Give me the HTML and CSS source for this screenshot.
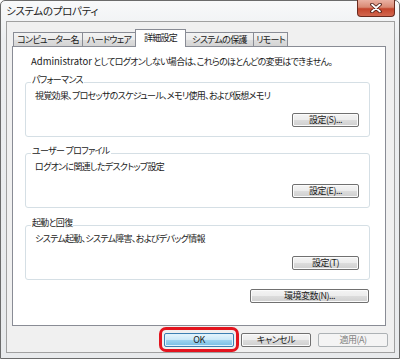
FILE: index.html
```html
<!DOCTYPE html>
<html lang="ja">
<head>
  <meta charset="UTF-8">
  <title>システムのプロパティ</title>
  <link rel="stylesheet" href="styles.css">
</head>
<body>
  <div class="window">
    <div class="titlebar">
      <span class="title">システムのプロパティ</span>
      <span class="close">
        <svg width="14" height="10" viewBox="0 0 14 10">
          <path d="M3 1.5 L11 8.5 M11 1.5 L3 8.5" stroke="#4a1a12" stroke-width="3.6" stroke-linecap="round"/>
          <path d="M3 1.5 L11 8.5 M11 1.5 L3 8.5" stroke="#ffffff" stroke-width="1.8" stroke-linecap="round"/>
        </svg>
      </span>
    </div>
    <div class="client">
      <div class="tabs">
        <span class="tab tab-name">コンピューター名</span>
        <span class="tab tab-hw">ハードウェア</span>
        <span class="tab tab-adv on">詳細設定</span>
        <span class="tab tab-prot">システムの保護</span>
        <span class="tab tab-rem">リモート</span>
      </div>
      <div class="panel">
        <p class="notice"><span class="latin">Administrator</span> としてログオンしない場合は、これらのほとんどの変更はできません。</p>
        <fieldset class="group">
          <legend>パフォーマンス</legend>
          <p class="desc">視覚効果、プロセッサのスケジュール、メモリ使用、および仮想メモリ</p>
          <div class="actions"><button class="btn btn-set">設定(S)...</button></div>
        </fieldset>
        <fieldset class="group">
          <legend>ユーザー プロファイル</legend>
          <p class="desc">ログオンに関連したデスクトップ設定</p>
          <div class="actions"><button class="btn btn-set">設定(E)...</button></div>
        </fieldset>
        <fieldset class="group group-last">
          <legend>起動と回復</legend>
          <p class="desc">システム起動、システム障害、およびデバッグ情報</p>
          <div class="actions"><button class="btn btn-set">設定(T)</button></div>
        </fieldset>
        <div class="env"><button class="btn btn-env">環境変数(N)...</button></div>
      </div>
      <div class="footer">
        <span class="ok-wrap">
          <button class="btn btn-foot btn-default">OK</button>
          <span class="ring"></span>
        </span>
        <button class="btn btn-foot">キャンセル</button>
        <button class="btn btn-foot" disabled>適用(A)</button>
      </div>
    </div>
  </div>
</body>
</html>
```

FILE: styles.css
```css
body{
  margin: 0;
  font-family: "Noto Sans CJK JP", sans-serif;
  font-size: 9px;
  letter-spacing: -0.7px;
  color: #1a1a1a;
  font-feature-settings: "palt" 1;
}
.latin{
  letter-spacing: 0;
  font-size: 9.5px;
}
.window{
  box-sizing: border-box;
  width: 400px;
  height: 359px;
  border: 1px solid #6b6b6b;
  border-radius: 5px 5px 0 0;
  background: linear-gradient(#f8f9fa, #eceef0 40px, #e8eaec);
  display: flex;
  flex-direction: column;
  padding: 0 4px 5px 5px;
}
.titlebar{
  height: 20px;
  display: flex;
  justify-content: space-between;
  align-items: flex-start;
}
.title{
  line-height: 19px;
  font-size: 10.5px;
  letter-spacing: -0.3px;
  color: #222;
}
.close{
  box-sizing: border-box;
  width: 38px;
  height: 17px;
  margin-top: -1px;
  border: 1px solid #6a2a1e;
  border-top: none;
  border-radius: 0 0 4px 4px;
  background: linear-gradient(#eab1a3, #d98a74 45%, #c4452c 55%, #d2674f);
  display: flex;
  align-items: center;
  justify-content: center;
}
.client{
  flex: 1;
  border: 1px solid #a0a0a0;
  background: #f0f0f0;
  padding: 7px 6px 0 5px;
  display: flex;
  flex-direction: column;
}
.tabs{
  display: flex;
  align-items: flex-end;
  height: 17px;
  padding-left: 1px;
}
.tab{
  box-sizing: border-box;
  height: 14px;
  border: 1px solid #898c95;
  border-bottom: none;
  border-right: none;
  background: linear-gradient(#f3f3f3, #ebebeb 50%, #dedede 50%, #d4d4d4);
  text-align: center;
  line-height: 13px;
  white-space: nowrap;
}
.tab-rem{
  border-right: 1px solid #898c95;
}
.tab.on{
  position: relative;
  height: 18px;
  margin-bottom: -1px;
  background: #fff;
  border-right: 1px solid #898c95;
  line-height: 15px;
}
.tab-name{ width: 69px; }
.tab-hw{ width: 53px; }
.tab-adv{ width: 51px; }
.tab-prot{ width: 67px; border-left: none; }
.tab-rem{ width: 35px; }
.panel{
  flex: 1;
  margin-right: 2px;
  background: #fff;
  border: 1px solid #898c95;
  padding: 8px 15px 0 12px;
  display: flex;
  flex-direction: column;
}
.notice{
  margin: 0 0 6px 6px;
  line-height: 13px;
}
.group{
  margin: 0 0 8px;
  min-width: 0;
  border: 1px solid #d5dfe5;
  border-radius: 3px;
  padding: 0 10px 9px 9px;
}
.group-last{
  margin-top: 1px;
  margin-bottom: 7px;
}
.group legend{
  padding: 0 1px 4px;
  margin-left: -4px;
  line-height: 12px;
}
.desc{
  margin: 0;
  line-height: 12px;
}
.actions{
  display: flex;
  justify-content: flex-end;
  margin-top: 11px;
}
.btn{
  box-sizing: border-box;
  height: 14px;
  padding: 0;
  border: 1px solid #707070;
  border-radius: 2px;
  background: linear-gradient(#f4f4f4, #ececec 50%, #dddddd 50%, #cfcfcf);
  box-shadow: inset 0 0 0 1px #fbfbfb;
  font-family: inherit;
  font-size: 9px;
  letter-spacing: -0.5px;
  line-height: 12px;
  color: #1a1a1a;
  font-feature-settings: "palt" 1;
}
.btn-set{ width: 67px; }
.env{
  display: flex;
  justify-content: flex-end;
  margin: 2px 1px 0 0;
}
.btn-env{ width: 119px; }
.footer{
  height: 26px;
  box-sizing: border-box;
  padding-top: 7px;
  display: flex;
  justify-content: flex-end;
  align-items: flex-start;
  gap: 7px;
}
.btn-foot{ width: 70px; }
.btn-default{
  border-color: #3c7fb1;
  background: linear-gradient(#e6f5fc, #c9e8f8 50%, #9fd4f0 50%, #78bde3);
  box-shadow: inset 0 0 0 1px #dff2fc;
}
.btn:disabled{
  border-color: #adb2b5;
  background: #f4f4f4;
  box-shadow: none;
  color: #838383;
}
.ok-wrap{
  position: relative;
  display: flex;
}
.ring{
  position: absolute;
  top: -6px;
  left: -5px;
  right: -5px;
  bottom: -5px;
  border: 3px solid #e3141e;
  border-radius: 7px;
}
```
